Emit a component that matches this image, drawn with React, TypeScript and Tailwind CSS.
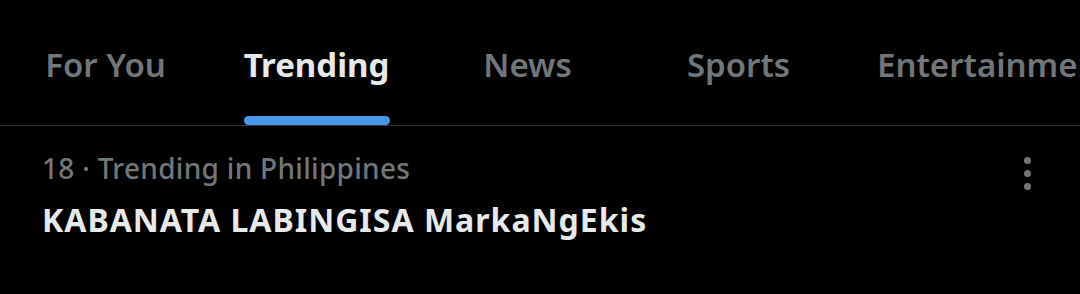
import React from 'react';

const tabs = ['For You', 'Trending', 'News', 'Sports'];

export default function App() {
  return (
    <div className="w-[1080px] h-[294px] bg-black overflow-hidden font-['Noto_Sans',sans-serif]">
      {/* Tabs */}
      <div className="flex h-[126px] border-b border-[#2f3336]">
        {tabs.map((t, i) => (
          <div key={t} className="w-[211px] shrink-0 flex flex-col items-center">
            <div className="h-[116px] flex items-center pt-[14px]">
              <span
                className={
                  i === 1
                    ? 'text-[33px] font-bold text-[#e7e9ea] whitespace-nowrap'
                    : 'text-[33px] font-semibold text-[#71767b] whitespace-nowrap'
                }
              >
                {t}
              </span>
            </div>
            {i === 1 && <div className="h-[9px] w-[146px] rounded-full bg-[#4a99e9]" />}
          </div>
        ))}
        <div className="shrink-0 pl-[33px] h-[116px] flex items-center pt-[14px]">
          <span className="text-[33px] font-semibold text-[#71767b] whitespace-nowrap">Entertainment</span>
        </div>
      </div>

      {/* Trend item */}
      <div className="flex justify-between pl-[42px] pr-[49px] pt-[24px]">
        <div>
          <p className="text-[28px] leading-[36px] font-medium text-[#71767b] tracking-[0.3px]">18 · Trending in Philippines</p>
          <p className="text-[32px] leading-[40px] mt-[14px] font-bold text-[#e7e9ea] tracking-[1px]">KABANATA LABINGISA MarkaNgEkis</p>
        </div>
        <div className="flex flex-col gap-[6px] pt-[7px]">
          <span className="w-[7px] h-[7px] rounded-full bg-[#71767b]" />
          <span className="w-[7px] h-[7px] rounded-full bg-[#71767b]" />
          <span className="w-[7px] h-[7px] rounded-full bg-[#71767b]" />
        </div>
      </div>
    </div>
  );
}
